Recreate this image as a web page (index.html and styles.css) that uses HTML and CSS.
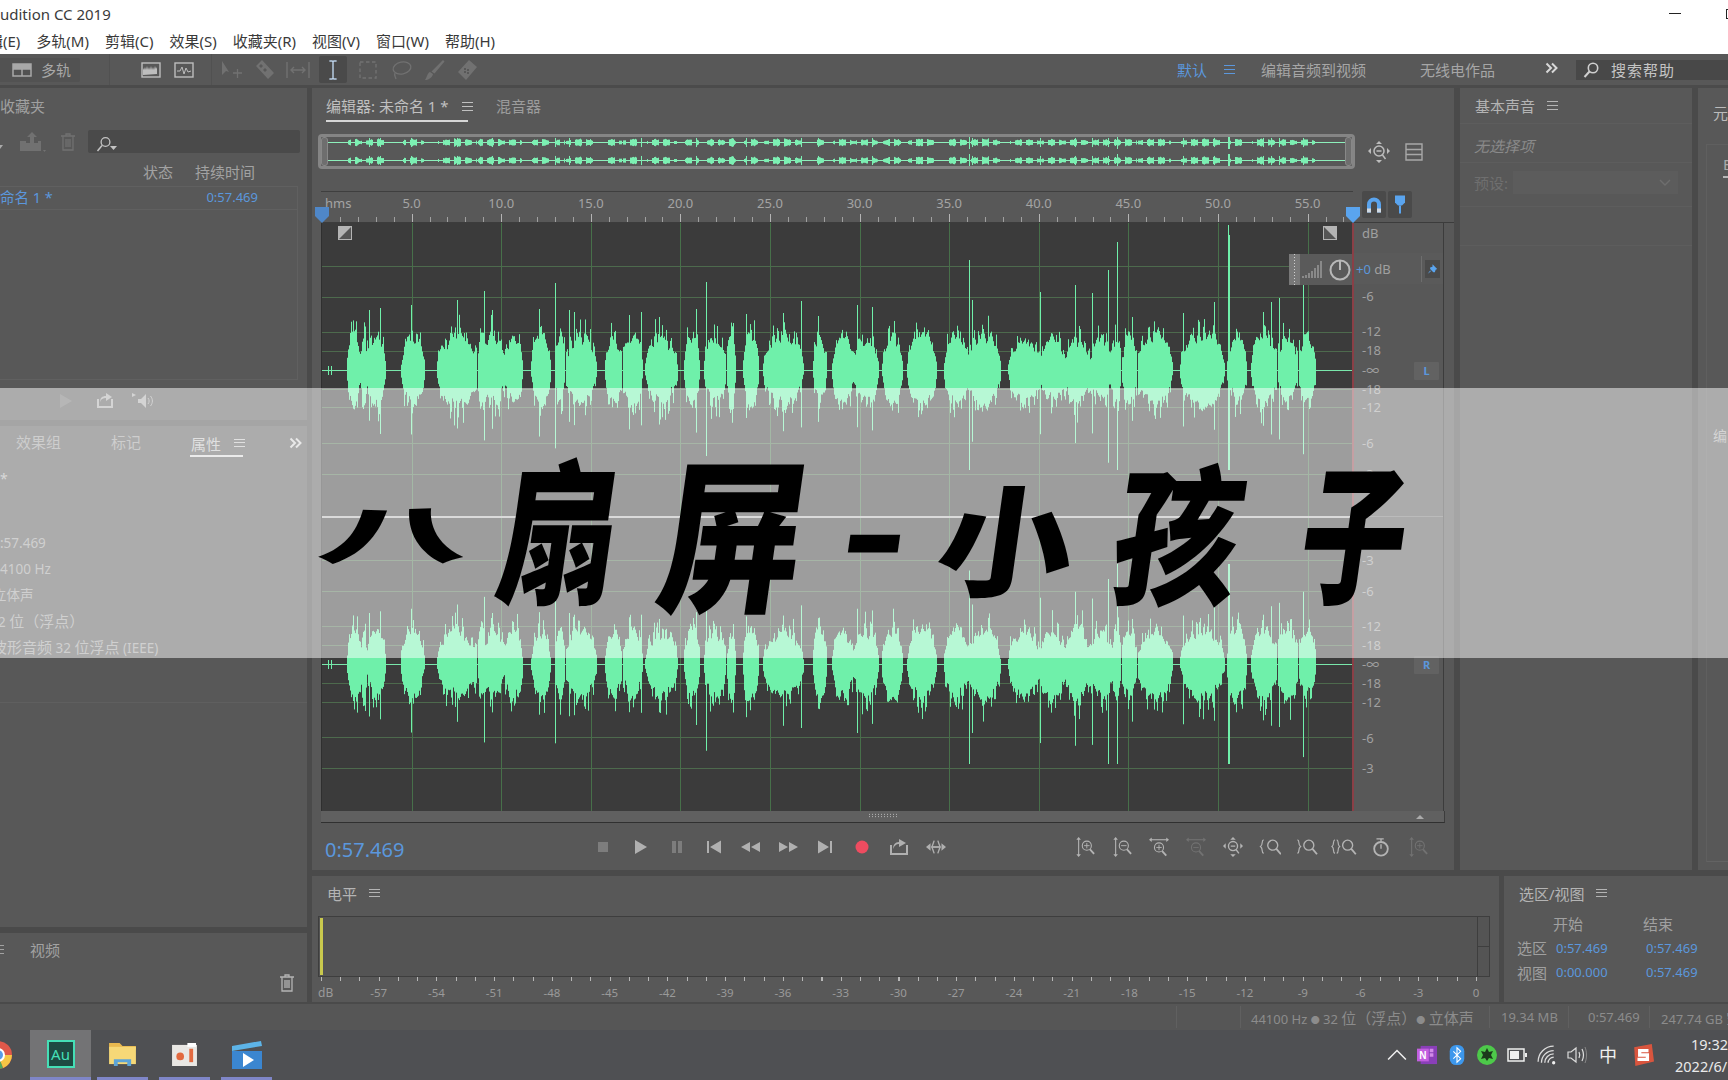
FILE: index.html
```html
<!DOCTYPE html>
<html lang="zh-CN">
<head>
<meta charset="utf-8">
<title>Adobe Audition CC 2019</title>
<link rel="stylesheet" href="styles.css">
</head>
<body>
<div class="app">
  <header class="titlebar">
    <div class="title-row"><span class="title">udition CC 2019</span><i class="win-min"></i><i class="win-max"></i></div>
    <nav class="menu"><span class="menu-first">辑(E)</span><span>多轨(M)</span><span>剪辑(C)</span><span>效果(S)</span><span>收藏夹(R)</span><span>视图(V)</span><span>窗口(W)</span><span>帮助(H)</span></nav>
  </header>

  <div class="toolbar">
    <div class="mode-btn">
      <svg class="ic20" viewBox="0 0 20 16"><path fill="none" stroke="currentColor" stroke-width="1.5" d="M1 2h18v12H1zM1 7h18M10 7v7"/><path fill="currentColor" d="M1 2h18v5H1z"/></svg>
      <span>多轨</span>
    </div>
    <i class="tb-sep sep-a"></i>
    <svg class="ic20 view-a" viewBox="0 0 20 16"><rect x="1" y="1" width="18" height="14" fill="none" stroke="currentColor" stroke-width="1.4"/><path fill="currentColor" d="M2 13V6l1 2 1-3 1 3 1-4 1 4 1-3 1 3 1-4 1 4 1-3 1 3 1-4 1 3 1-2v7z"/></svg>
    <svg class="ic20 view-b" viewBox="0 0 20 16"><rect x="1" y="1" width="18" height="14" fill="none" stroke="currentColor" stroke-width="1.4"/><path fill="none" stroke="currentColor" d="M3 9h3l2-4 2 7 2-6 2 4 3-1"/></svg>
    <i class="tb-sep sep-b"></i>
    <div class="tools">
      <svg class="ic24 dim" viewBox="0 0 24 20"><path fill="currentColor" d="M2 1v14l4-4 3 1z"/><path fill="none" stroke="currentColor" stroke-width="1.3" d="M13 13h9M17.500 9v9"/></svg>
      <svg class="ic24 dim" viewBox="0 0 24 20"><path fill="currentColor" fill-rule="evenodd" d="M3 6l6-6 12 13-6 6zM8 4L6 6l2 2 2-2zm4 4l-2 2 2 2 2-2z"/></svg>
      <svg class="ic24 dim" viewBox="0 0 24 20"><path fill="none" stroke="currentColor" stroke-width="1.4" d="M1 2v16M23 2v16M5 10h14M8 7l-3 3 3 3M16 7l3 3-3 3"/></svg>
      <div class="tool-on"><svg class="ic24" viewBox="0 0 24 22"><path fill="none" stroke="#b9cfe6" stroke-width="1.6" d="M8 1h3l1 1 1-1h3M12 2v18M8 21h3l1-1 1 1h3"/></svg></div>
      <svg class="ic24 dim" viewBox="0 0 24 20"><path fill="none" stroke="currentColor" stroke-width="1.4" stroke-dasharray="3.500 2.500" d="M4 2h16v16H4z"/></svg>
      <svg class="ic24 dim" viewBox="0 0 24 20"><ellipse cx="13" cy="8" rx="9" ry="6" fill="none" stroke="currentColor" stroke-width="1.3" transform="rotate(-12 13 8)"/><path fill="none" stroke="currentColor" stroke-width="1.300" d="M6 13c-1 2 0 3 1 6"/></svg>
      <svg class="ic24 dim" viewBox="0 0 24 20"><path fill="currentColor" d="M21 0l1.500 1.500-10 12-3-2zM8 12l3 2c-1 4-5 6-8 6 2-2 2-7 5-8z"/></svg>
      <svg class="ic24 dim" viewBox="0 0 24 20"><path fill="currentColor" d="M3 12L14 0l8 7-11 13z"/><path fill="#585858" d="M9 11h2v2H9zM12 9h2v2h-2zM12 12h2v2h-2zM9 8h2v2H9z"/></svg>
    </div>
    <div class="workspaces">
      <span class="ws-active">默认</span><i class="ham ham-blue"></i>
      <span class="ws ws-edit">编辑音频到视频</span>
      <span class="ws ws-radio">无线电作品</span>
      <svg class="chev chev-top" viewBox="0 0 13 12"><path fill="none" stroke="#d8d8d8" stroke-width="2" d="M1.500 1.500L6 6l-4.500 4.500M7 1.500L11.500 6 7 10.500"/></svg>
    </div>
    <div class="help">
      <svg class="ic16" viewBox="0 0 16 16"><circle cx="10" cy="6" r="4.700" fill="none" stroke="#cfcfcf" stroke-width="1.600"/><path stroke="#cfcfcf" stroke-width="2" d="M6.500 9.500L1.500 15"/></svg>
      <span>搜索帮助</span>
    </div>
  </div>

  <div class="workspace">
    <aside class="left-col">
      <section class="panel files">
        <div class="panel-head"><span class="files-title">收藏夹</span></div>
        <div class="file-tools">
          <i class="caret"></i>
          <svg class="ic26 dim" viewBox="0 0 26 22"><path fill="currentColor" d="M0 10h6v2h4V6H7l5-5 5 5h-3v6h4v-2h3v10H0z"/><path fill="currentColor" d="M23 19h3l-1.500 2z"/></svg>
          <svg class="ic16 dim" viewBox="0 0 16 18"><path fill="none" stroke="currentColor" stroke-width="1.300" d="M1 3h14M6 3V1h4v2M3 3v14h10V3M6 6v8M8 6v8M10 6v8"/></svg>
          <div class="file-search"><svg class="ic22" viewBox="0 0 22 16"><circle cx="9.500" cy="6" r="4.400" fill="none" stroke="#c4c4c4" stroke-width="1.300"/><path stroke="#c4c4c4" stroke-width="1.500" d="M6 9.500L1.500 15"/><path fill="#c4c4c4" d="M14 10h7l-3.500 4z"/></svg></div>
        </div>
        <div class="file-cols"><span class="col-state">状态</span><span class="col-dur">持续时间</span></div>
        <div class="file-list">
          <div class="file-row"><span class="blue file-name">命名 1 *</span><span class="blue file-dur">0:57.469</span></div>
        </div>
        <div class="file-play">
          <svg class="ic14 play-dim" viewBox="0 0 14 14"><path fill="currentColor" d="M1 0l12 7-12 7z"/></svg>
          <svg class="ic20 play-loop" viewBox="0 0 20 16"><path fill="none" stroke="currentColor" stroke-width="2" d="M3 6v8h14V6"/><path fill="currentColor" d="M5 9c0-4 2-6 6-6V0l6 4-6 4V5C8 5 6 6 5 9z"/></svg>
          <svg class="ic24 play-spk" viewBox="0 0 24 16"><path fill="currentColor" d="M0 0l4 2-4 2zM6 6h3l5-5v14l-5-5H6z"/><path fill="none" stroke="currentColor" d="M16 5c1.500 2 1.500 4 0 6M18.500 3c2.500 3 2.500 7 0 10"/></svg>
        </div>
      </section>

      <section class="panel props">
        <div class="tabs props-tabs">
          <span class="tab-fx">效果组</span><span class="tab-mark">标记</span>
          <span class="tab-on"><b>属性</b><i class="ham"></i></span>
          <svg class="chev chev-props" viewBox="0 0 13 12"><path fill="none" stroke="#d0d0d0" stroke-width="2" d="M1.500 1.500L6 6l-4.500 4.500M7 1.500L11.500 6 7 10.500"/></svg>
        </div>
        <div class="prop-star">*</div>
        <ul class="prop-list">
          <li>:57.469</li>
          <li>4100 Hz</li>
          <li class="prop-cut cjk">立体声</li>
          <li class="prop-two">2 <span class="cjk">位（浮点）</span></li>
          <li class="prop-cut2"><span class="cjk">波形音频</span> 32 <span class="cjk">位浮点</span> (IEEE)</li>
        </ul>
        <i class="prop-rule"></i>
      </section>

      <section class="panel video">
        <div class="video-tabs"><i class="ham ham-cut"></i><span>视频</span></div>
        <svg class="ic16 video-trash" viewBox="0 0 16 18"><path fill="none" stroke="currentColor" stroke-width="1.300" d="M1 3h14M6 3V1h4v2M3 3v14h10V3M6 6v8M8 6v8M10 6v8"/></svg>
      </section>
    </aside>

    <div class="right-area">
      <div class="top-row">
        <main class="panel editor">
          <div class="tabs editor-tabs">
            <span class="tab-on"><b>编辑器: 未命名 1 *</b><i class="ham"></i></span>
            <span class="tab-mix">混音器</span>
          </div>
          <div class="overview-row">
            <div class="overview">
              <i class="ov-handle"></i>
              <canvas id="ov" width="1017" height="29"></canvas>
              <i class="ov-handle"></i>
            </div>
            <svg class="ic22 ov-zoom" viewBox="0 0 22 22"><circle cx="11" cy="10" r="5" fill="none" stroke="currentColor" stroke-width="1.500"/><path stroke="currentColor" stroke-width="1.500" d="M8.500 10h5M14.500 14l3 4"/><path fill="currentColor" d="M11 0l3 3H8zM8 19h6l-3 3zM0 10l3-3v6zM22 10l-3-3v6z"/></svg>
            <svg class="ic18 ov-panels" viewBox="0 0 18 18"><path fill="none" stroke="currentColor" stroke-width="1.400" d="M1 1h16v16H1zM1 6.500h16M1 11.500h16"/></svg>
          </div>
          <div class="ruler-row">
            <div class="ruler">
              <span class="r-first">hms</span><span>5.0</span><span>10.0</span><span>15.0</span><span>20.0</span><span>25.0</span><span>30.0</span><span>35.0</span><span>40.0</span><span>45.0</span><span>50.0</span><span>55.0</span>
              <svg class="playhead ph-start" viewBox="0 0 14 16"><path fill="#4f87c8" d="M0 0h14v9l-7 7-7-7z"/></svg>
              <svg class="playhead ph-end" viewBox="0 0 14 16"><path fill="#5aa4ee" d="M0 0h14v9l-7 7-7-7z"/></svg>
            </div>
            <button class="sq-btn sq-first"><svg viewBox="0 0 16 18"><path fill="none" stroke="#5aa4ee" stroke-width="4" d="M3 17V9a5 5 0 0 1 10 0v8"/><path fill="#d0d8e0" d="M1 13h4v4H1zM11 13h4v4h-4z"/></svg></button>
            <button class="sq-btn"><svg viewBox="0 0 16 18"><path fill="#5aa4ee" d="M3 0h10v7l-3 3H6L3 7z"/><path fill="#5aa4ee" d="M7 10h2v8H7z"/></svg></button>
          </div>
          <div class="plot-row">
            <div class="plot">
              <canvas id="wave" width="1030" height="589"></canvas>
              <svg class="fade fade-l" viewBox="0 0 14 14"><path fill="#b4b4b4" d="M0 0h14v14H0z"/><path fill="#555" d="M1 13L13 1v12z"/></svg>
              <svg class="fade fade-r" viewBox="0 0 14 14"><path fill="#b4b4b4" d="M0 0h14v14H0z"/><path fill="#555" d="M1 1l12 12H1z"/></svg>
              <div class="hud">
                <i class="hud-grip"></i>
                <svg class="hud-bars" viewBox="0 0 20 18"><path stroke="#b8b8b8" stroke-width="1" d="M1 17v-2M4 17v-3M7 17v-5M10 17v-7M13 17V7M16 17V4M19 17V0"/></svg>
                <svg class="hud-knob" viewBox="0 0 22 22"><circle cx="11" cy="11" r="9.500" fill="none" stroke="#b8b8b8" stroke-width="2"/><path stroke="#b8b8b8" stroke-width="2" d="M11 2v9"/></svg>
              </div>
            </div>
            <div class="gutter">
              <span>dB</span>
              <div class="db-hud"><span><em>+0</em> dB</span><i></i><button class="pin"><svg viewBox="0 0 14 14"><path fill="#5aa4ee" d="M7 1l6 6-2 1-1 3-2 0-4-4 0-2 3-1zM4 9l1 1-4 3z"/></svg></button></div>
              <span>-6</span><span>-12</span><span>-18</span><span>-∞</span><span>-18</span><span>-12</span><span>-6</span><span>-3</span>
              <span>-3</span><span>-6</span><span>-12</span><span>-18</span><span>-∞</span><span>-18</span><span>-12</span><span>-6</span><span>-3</span>
              <b class="chan chan-l">L</b><b class="chan chan-r">R</b>
            </div>
          </div>
          <div class="scroll-row"><i class="scroll-grip"></i><i class="scroll-up"></i></div>
          <div class="transport">
            <span class="time">0:57.469</span>
            <div class="t-btns">
              <svg class="t dim2" viewBox="0 0 16 16"><path fill="currentColor" d="M3 3h10v10H3z"/></svg>
              <svg class="t" viewBox="0 0 16 16"><path fill="currentColor" d="M3 1l12 7-12 7z"/></svg>
              <svg class="t dim2" viewBox="0 0 16 16"><path fill="currentColor" d="M3 2h4v12H3zM9 2h4v12H9z"/></svg>
              <svg class="t" viewBox="0 0 16 16"><path fill="currentColor" d="M1 2h2v12H1zM15 1.500v13L4 8z"/></svg>
              <svg class="t t-w" viewBox="0 0 20 16"><path fill="currentColor" d="M0 8l9-5v10zM10 8l9-5v10z"/></svg>
              <svg class="t t-w" viewBox="0 0 20 16"><path fill="currentColor" d="M20 8l-9-5v10zM10 8L1 3v10z"/></svg>
              <svg class="t" viewBox="0 0 16 16"><path fill="currentColor" d="M15 2h-2v12h2zM1 1.500v13L12 8z"/></svg>
              <svg class="t" viewBox="0 0 16 16"><circle cx="8" cy="8" r="6.500" fill="#ee4c60"/></svg>
              <svg class="t t-w" viewBox="0 0 20 16"><path fill="none" stroke="currentColor" stroke-width="2" d="M2 6v9h16V6"/><path fill="currentColor" d="M4 10c0-4 2-7 6-7V0l7 4-7 4V5c-3 0-5 2-6 5z"/></svg>
              <svg class="t t-w" viewBox="0 0 22 16"><path fill="currentColor" d="M0 8l5-4v8zM22 8l-5-4v8z"/><path fill="none" stroke="currentColor" stroke-width="1.500" d="M9 1L6.500 8 9 15M13 1l2.500 7L13 15"/><path fill="currentColor" d="M6 7h10v2H6z"/></svg>
            </div>
            <div class="z-btns">
              <svg class="z" viewBox="0 0 22 22"><use href="#zv"/><path stroke="currentColor" d="M10 9.500h6M13 6.500v6"/></svg>
              <svg class="z" viewBox="0 0 22 22"><use href="#zv"/><path stroke="currentColor" d="M10 9.500h6"/></svg>
              <svg class="z" viewBox="0 0 22 22"><use href="#zh"/><path stroke="currentColor" d="M8 11.500h6M11 8.500v6"/></svg>
              <svg class="z dim" viewBox="0 0 22 22"><use href="#zh"/><path stroke="currentColor" d="M8 11.500h6"/></svg>
              <svg class="z" viewBox="0 0 22 22"><circle cx="11" cy="10" r="5" fill="none" stroke="currentColor" stroke-width="1.500"/><path stroke="currentColor" stroke-width="1.500" d="M8.500 10h5M14.500 14l3 4"/><path fill="currentColor" d="M11 0l3 3H8zM8 19h6l-3 3zM0 10l3-3v6zM22 10l-3-3v6z"/></svg>
              <svg class="z" viewBox="0 0 24 22"><path fill="none" stroke="currentColor" stroke-width="1.300" d="M5 3C2 4 5 8 1.500 10.500 5 13 2 17 5 18"/><use href="#zm" x="7"/></svg>
              <svg class="z" viewBox="0 0 24 22"><path fill="none" stroke="currentColor" stroke-width="1.300" d="M1.500 3C4.500 4 1.500 8 5 10.500 1.500 13 4.500 17 1.500 18"/><use href="#zm" x="6"/></svg>
              <svg class="z" viewBox="0 0 28 22"><path fill="none" stroke="currentColor" stroke-width="1.300" d="M4 3C1 4 4 8 .8 10.500 4 13 1 17 4 18M6 3c3 1 0 5 3.200 7.500C6 13 9 17 6 18"/><use href="#zm" x="10"/></svg>
              <svg class="z" viewBox="0 0 22 22"><circle cx="11" cy="13" r="7.500" fill="none" stroke="currentColor" stroke-width="2"/><path stroke="currentColor" stroke-width="1.500" d="M11 13V8M6 2h8M11 2v3"/></svg>
              <svg class="z dim" viewBox="0 0 22 22"><use href="#zv"/><path stroke="currentColor" d="M10 9.500h6M13 6.500v6"/></svg>
            </div>
          </div>
        </main>

        <section class="panel sound">
          <div class="sound-head"><span>基本声音</span><i class="ham"></i></div>
          <div class="sound-row sound-none">无选择项</div>
          <div class="sound-row sound-preset"><span>预设:</span><div class="preset-box"><svg viewBox="0 0 12 8"><path fill="none" stroke="#6e6e6e" stroke-width="1.400" d="M1 1l5 5 5-5"/></svg></div></div>
          <div class="sound-row sound-blank"></div>
        </section>

        <section class="panel meta">
          <div class="meta-title">元</div>
          <div class="meta-box"><span class="meta-tab">B</span><span class="meta-edit">编</span></div>
        </section>
      </div>

      <div class="bottom-row">
        <section class="panel level">
          <div class="level-head"><span>电平</span><i class="ham"></i></div>
          <div class="meter"><i class="meter-peak"></i><i class="meter-mid"></i><i class="meter-end"></i></div>
          <div class="meter-ticks"></div>
          <div class="meter-scale"><span class="m-first">dB</span><span>-57</span><span>-54</span><span>-51</span><span>-48</span><span>-45</span><span>-42</span><span>-39</span><span>-36</span><span>-33</span><span>-30</span><span>-27</span><span>-24</span><span>-21</span><span>-18</span><span>-15</span><span>-12</span><span>-9</span><span>-6</span><span>-3</span><span>0</span></div>
        </section>
        <section class="panel selection">
          <div class="level-head sel-head"><span>选区/视图</span><i class="ham"></i></div>
          <div class="sel-grid">
            <span></span><span class="sel-h">开始</span><span class="sel-h">结束</span>
            <span class="sel-l">选区</span><span class="blue">0:57.469</span><span class="blue">0:57.469</span>
            <span class="sel-l">视图</span><span class="blue">0:00.000</span><span class="blue">0:57.469</span>
          </div>
        </section>
      </div>
    </div>
  </div>

  <footer class="status">
    <i class="st-sep st-a"></i><i class="st-sep st-b"></i>
    <span class="st-format">44100 Hz <small>●</small> 32 <span class="cjk">位（浮点）</span><small>●</small> <span class="cjk">立体声</span></span><i class="st-sep"></i>
    <span class="st-size">19.34 MB</span><i class="st-sep"></i>
    <span class="st-dur">0:57.469</span><i class="st-sep"></i>
    <span class="st-free">247.74 GB <span class="cjk">空闲</span></span>
  </footer>

  <div class="taskbar">
    <svg class="task-chrome" viewBox="0 0 28 28"><circle cx="14" cy="14" r="14" fill="#e0584a"/><path fill="#f6c645" d="M14 14l14 0a14 14 0 0 1-9 13z"/><path fill="#52a95c" d="M14 14l5 13A14 14 0 0 1 1 9z"/><circle cx="14" cy="14" r="7" fill="#fff"/><circle cx="14" cy="14" r="5" fill="#5a9be8"/></svg>
    <div class="task-item task-on"><span class="au-logo">Au</span></div>
    <div class="task-item">
      <svg class="task-ic" viewBox="0 0 28 24"><path fill="#e9b950" d="M0 0h11l3 3h14v4H0z"/><path fill="#f6d877" d="M0 4h28v18H0z"/><path fill="#5da4d8" d="M5 24v-7h18v7h-4v-4H9v4z"/></svg>
    </div>
    <div class="task-item">
      <svg class="task-ic" viewBox="0 0 28 24"><path fill="#e9e7e4" d="M1 2h26v22H1z"/><path fill="#fff" d="M17 0h9v4h-9z"/><circle cx="9.500" cy="14" r="4" fill="#e2693f"/><path fill="#e2693f" d="M19 6h4v14h-4z"/></svg>
    </div>
    <div class="task-item">
      <svg class="task-ic task-ic-lg" viewBox="0 0 30 28"><path fill="#3b86d0" d="M0 10h30v18H0z"/><path fill="#5db4e8" d="M0 5L29 0l1 5L0 10z"/><path fill="#fff" d="M11 12l11 7-11 7z"/></svg>
    </div>
    <div class="tray">
      <svg class="tray-ic" viewBox="0 0 18 12"><path fill="none" stroke="#eee" stroke-width="1.400" d="M1 10l8-8 8 8"/></svg>
      <svg class="tray-ic" viewBox="0 0 22 20"><path fill="#8a3fb8" d="M4 0h18v20H4z"/><path fill="#c35fe0" d="M0 3h13v14H0z"/><path fill="#d28be8" d="M14 3h4v4h-4zM14 8h4v4h-4z"/><text x="6.500" y="14.500" font-size="11" font-weight="700" text-anchor="middle" fill="#fff" font-family="Liberation Sans">N</text></svg>
      <svg class="tray-ic" viewBox="0 0 16 22"><rect width="16" height="22" rx="7" fill="#3d97ec"/><path fill="none" stroke="#fff" stroke-width="1.200" d="M4 7l8 8-4 4V3l4 4-8 8"/></svg>
      <svg class="tray-ic" viewBox="0 0 20 20"><circle cx="10" cy="10" r="10" fill="#4dc94a"/><path fill="#1c3a1c" d="M10 3l2 4 4-1-2 4 2 4-4-1-2 3-2-3-4 1 2-4-2-4 4 1z"/></svg>
      <svg class="tray-ic" viewBox="0 0 20 14"><path fill="none" stroke="#eee" stroke-width="1.500" d="M1 1h16v12H1z"/><path fill="#eee" d="M3 3h9v8H3zM18 5h2v4h-2z"/></svg>
      <svg class="tray-ic" viewBox="0 0 18 18"><path fill="none" stroke="#ddd" stroke-width="1.200" d="M1 15a14 14 0 0 1 14-14M4 16a11 11 0 0 1 11-11M7 16a8 8 0 0 1 8-8M10 16a5 5 0 0 1 5-5"/><circle cx="15" cy="16" r="1.500" fill="#eee"/></svg>
      <svg class="tray-ic" viewBox="0 0 20 18"><path fill="none" stroke="#ddd" stroke-width="1.200" d="M1 6h3l5-4v14l-5-4H1zM12 6c1 2 1 4 0 6M15 3c2 4 2 8 0 12"/><path fill="none" stroke="#888" d="M18 1c2 5 2 11 0 16"/></svg>
      <span class="tray-zh">中</span>
      <svg class="tray-ic tray-sg" viewBox="0 0 20 20"><path fill="#d9553e" d="M2 3l16-3 2 16-17 4z"/><path fill="none" stroke="#fff" stroke-width="3" d="M15 6H7v4h7v4H5"/></svg>
      <div class="clock"><span class="clock-t">19:32</span><span>2022/6/12</span></div>
    </div>
  </div>

  <div class="banner" aria-label="八扇屏-小孩子">
    <span class="g g-ba">八</span><span class="g g-shan">扇</span><span class="g g-ping">屏</span><span class="g g-dash">-</span><span class="g g-xiao">小</span><span class="g g-hai">孩</span><span class="g g-zi">子</span>
  </div>
</div>

<svg class="defs" width="0" height="0">
  <defs>
    <g id="zm"><circle cx="8" cy="9" r="5.500" fill="none" stroke="currentColor" stroke-width="1.500"/><path stroke="currentColor" stroke-width="2" d="M12 13l5 6"/></g>
    <g id="zv"><path fill="none" stroke="currentColor" stroke-width="1.200" d="M4 2v18"/><path fill="currentColor" d="M4 0l2.500 3h-5zM4 22l2.500-3h-5z"/><circle cx="13" cy="9.500" r="5" fill="none" stroke="currentColor" stroke-width="1.200"/><path stroke="currentColor" stroke-width="2" d="M16.500 13.500l4.500 5"/></g>
    <g id="zh"><path fill="none" stroke="currentColor" stroke-width="1.200" d="M2 3h18"/><path fill="currentColor" d="M0 3l3-2.500v5zM22 3l-3-2.500v5z"/><circle cx="11" cy="11.500" r="5" fill="none" stroke="currentColor" stroke-width="1.200"/><path stroke="currentColor" stroke-width="2" d="M14.500 15.500l4.500 5"/></g>
  </defs>
</svg>
<script src="wave.js"></script>
</body>
</html>
```

FILE: styles.css
```css
* { box-sizing: border-box; }
html, body { margin: 0; padding: 0; }
body {
  width: 1728px; height: 1080px; overflow: hidden;
  font-family: "Noto Sans", "Noto Sans CJK SC", sans-serif;
  font-size: 15px; color: #a2a2a2; background: #4a4a4a;
}
i { display: block; font-style: normal; }
svg { display: block; flex: none; }
.defs { position: absolute; }
.app { position: relative; display: flex; flex-direction: column; width: 1728px; height: 1080px; overflow: hidden; }
.blue { color: #5b97dc; }
.dim { color: #717171; }
.cjk { font-size: 15px; }
.ic14 { width: 14px; height: 14px; }
.ic16 { width: 16px; height: 18px; }
.ic18 { width: 18px; height: 18px; }
.ic20 { width: 20px; height: 16px; }
.ic22 { width: 22px; height: 22px; }
.ic24 { width: 24px; height: 20px; }
.ic26 { width: 26px; height: 22px; }
.ham {
  width: 11px; height: 9px; flex: none;
  background: linear-gradient(currentColor, currentColor) 0 0/100% 1.400px no-repeat,
              linear-gradient(currentColor, currentColor) 0 50%/100% 1.400px no-repeat,
              linear-gradient(currentColor, currentColor) 0 100%/100% 1.400px no-repeat;
}

/* title bar */
.titlebar { height: 54px; background: #fff; color: #333; flex: none; }
.title-row { height: 27px; display: flex; align-items: center; }
.title { width: 1669px; flex: none; font-size: 15px; color: #3b3b3b; white-space: nowrap; }
.win-min { width: 12px; height: 1px; background: #222; flex: none; }
.win-max { width: 12px; height: 10px; border: 1px solid #222; margin-left: 45px; flex: none; }
.menu { height: 27px; display: flex; align-items: center; gap: 16px; color: #3a3a3a; white-space: nowrap; }
.menu-first { margin-left: -12px; }

/* toolbar */
.toolbar { height: 34px; flex: none; display: flex; align-items: center; background: #585858; border-bottom: 3px solid #4b4b4b; color: #a2a2a2; white-space: nowrap; }
.mode-btn { width: 80px; height: 24px; flex: none; display: flex; align-items: center; gap: 9px; padding-left: 12px; background: #525252; color: #a8a8a8; border-radius: 0 2px 2px 0; }
.tb-sep { width: 1px; height: 31px; background: #515151; flex: none; }
.sep-a { margin-left: 29px; }
.view-a { margin-left: 31px; color: #bdbdbd; }
.view-b { margin-left: 13px; color: #bdbdbd; }
.sep-b { margin-left: 17px; }
.tools { display: flex; align-items: center; gap: 9px; margin-left: 8px; flex: none; }
.tool-on { width: 28px; height: 27px; background: #4a4a4a; display: flex; align-items: center; justify-content: center; border-radius: 2px; }
.workspaces { display: flex; align-items: center; margin-left: 698px; flex: none; }
.ws-active { color: #5b97dc; }
.ham-blue { color: #5b97dc; margin-left: 17px; }
.ws { color: #a6a6a6; }
.ws-edit { margin-left: 26px; }
.ws-radio { margin-left: 54px; }
.chev { width: 13px; height: 12px; }
.chev-top { margin-left: 50px; margin-top: -4px; }
.help { flex: 1; height: 20px; margin-left: 18px; background: #484848; display: flex; align-items: center; padding-left: 7px; gap: 12px; color: #c4c4c4; letter-spacing: 1px; }

/* workspace */
.workspace { flex: none; height: 914px; margin-bottom: 2px; display: flex; gap: 5px; }
.panel { background: #585858; position: relative; }
.left-col { width: 307px; flex: none; display: flex; flex-direction: column; gap: 6px; }
.right-area { flex: 1; min-width: 0; display: flex; flex-direction: column; gap: 6px; }
.top-row { height: 782px; display: flex; gap: 6px; }
.bottom-row { height: 126px; display: flex; gap: 5px; }

/* files */
.files { height: 332px; flex: none; }
.panel-head { height: 35px; display: flex; align-items: center; }
.files-title { color: #a0a0a0; }
.file-tools { height: 23px; margin-top: 7px; display: flex; align-items: center; }
.caret { width: 0; height: 0; flex: none; border: 3px solid transparent; border-top: 4px solid #aaa; border-bottom: 0; margin-left: -3px; margin-top: 10px; }
.file-tools .ic26 { margin-left: 17px; }
.file-tools .ic16 { margin-left: 14px; }
.file-search { width: 212px; height: 23px; flex: none; margin-left: 12px; background: #4a4a4a; padding: 3px 0 0 8px; border-radius: 2px; }
.file-cols { height: 26px; margin-top: 7px; padding-bottom: 4px; display: flex; align-items: center; }
.col-state { margin-left: 143px; }
.col-dur { margin-left: 22px; }
.file-list { width: 298px; height: 194px; border: 1px solid #606060; border-left: 0; }
.file-row { height: 23px; display: flex; align-items: center; justify-content: space-between; padding: 0 39px 3px 0; border-bottom: 1px solid #606060; font-size: 13px; }
.file-name { font-size: 14.500px; }
.file-play { display: flex; align-items: center; height: 41px; }
.play-dim { margin-left: 59px; color: #6d6d6d; }
.play-loop { margin-left: 22px; color: #a8a8a8; }
.play-spk { margin-left: 17px; color: #a8a8a8; }

/* properties */
.props { flex: 1; min-height: 0; }
.tabs { display: flex; align-items: flex-start; color: #9c9c9c; white-space: nowrap; }
.tab-on { display: flex; align-items: center; color: #c0c0c0; border-bottom: 2px solid #d6d6d6; flex: none; }
.tab-on b { font-weight: 400; }
.props-tabs { height: 34px; padding-top: 5px; }
.tab-fx { margin-left: 16px; }
.tab-mark { margin-left: 50px; }
.props-tabs .tab-on { margin-left: 49px; width: 53px; height: 26px; padding-left: 1px; }
.props-tabs .ham { margin-left: 13px; }
.chev-props { margin-left: 46px; margin-top: 6px; }
.prop-star { height: 26px; line-height: 32px; margin-top: 3px; color: #b0b0b0; font-size: 14px; }
.prop-list { list-style: none; margin: 41px 0 0; padding: 0; }
.prop-list li { height: 26px; line-height: 26px; font-size: 13.500px; color: #a0a0a0; white-space: nowrap; }
.prop-cut { margin-left: -7px; }
.prop-two { margin-left: -2px; }
.prop-cut2 { margin-left: -8px; }
.prop-rule { height: 1px; background: #5f5f5f; margin-top: 42px; }

/* video */
.video { height: 69px; flex: none; }
.video-tabs { height: 33px; display: flex; align-items: center; gap: 26px; }
.ham-cut { margin-left: -7px; }
.video-trash { margin-left: 279px; margin-top: 8px; color: #b4b4b4; }

/* editor */
.editor { width: 1142px; flex: none; }
.editor-tabs { height: 34px; padding: 7px 0 0 14px; }
.editor-tabs .tab-on { height: 27px; width: 142px; gap: 13px; align-items: flex-start; }
.tab-mix { margin-left: 28px; }
.editor-tabs .ham { margin-top: 7px; }
.overview-row { height: 35px; margin: 12px 0 22px 6px; display: flex; align-items: center; }
.overview { width: 1037px; height: 35px; flex: none; display: flex; align-items: center; border: 3px solid #858585; border-radius: 4px; }
.ov-handle { width: 7px; height: 100%; background: #6e6e6e; border: 1px solid #888; border-radius: 3px; flex: none; }
#ov { display: block; width: 1017px; height: 29px; flex: none; }
.ov-zoom { margin-left: 13px; color: #bdbdbd; }
.ov-panels { margin-left: 15px; color: #a8a8a8; }
.ruler-row { margin-left: 9px; height: 31px; display: flex; align-items: flex-start; }
.ruler {
  position: relative; width: 1032px; height: 31px; flex: none; display: flex; align-items: flex-start; padding-top: 1px;
  border-top: 1px solid #3f3f3f; font-size: 13px; color: #a4a4a4; line-height: 20px;
  background:
    repeating-linear-gradient(90deg, #b4b4b4 0 1px, transparent 1px 89.600px) 1px 100%/100% 8px no-repeat,
    repeating-linear-gradient(90deg, #a0a0a0 0 1px, transparent 1px 17.920px) 1px 100%/100% 5px no-repeat;
}
.ruler span { width: 89.600px; flex: none; text-align: center; }
.ruler .r-first { width: 45.800px; text-align: left; padding-left: 4px; }
.playhead { position: absolute; width: 14px; height: 16px; bottom: -1px; }
.ph-start { left: -6px; }
.ph-end { right: -7px; }
.sq-btn { width: 24px; height: 27px; margin: 0 0 0 2px; padding: 4px; background: #4a4a4a; border: 0; border-radius: 2px; flex: none; }
.sq-first { margin-left: 9px; }
.sq-btn svg { width: 100%; height: 100%; }
.plot-row { display: flex; margin-left: 9px; height: 589px; border-top: 1px solid #3c3c3c; }
.plot { position: relative; width: 1031px; flex: none; background: #3b3b3b; border-left: 1px solid #2f2f2f; }
#wave { display: block; width: 1030px; height: 589px; }
.fade { position: absolute; width: 14px; height: 14px; top: 3px; }
.fade-l { left: 16px; }
.fade-r { right: 15px; }
.hud { position: absolute; right: 0; top: 31px; width: 63px; height: 31px; display: flex; align-items: center; background: #5a5a5a; }
.hud-grip { width: 11px; height: 31px; flex: none; background: #787878 radial-gradient(#d0d0d0 30%, transparent 35%) center/3px 3px repeat-y; }
.hud-bars { width: 20px; height: 18px; margin-left: 2px; }
.hud-knob { width: 22px; height: 22px; margin-left: 7px; }
.gutter {
  position: relative; width: 92px; flex: none; display: grid; justify-items: start; align-items: start;
  grid-template-rows: 27px 36px 35px 19px 20px 19px 18px 36px 31px 86px 31px 35px 19px 19px 19px 19px 36px 30px 1fr;
  border-left: 2px solid #8a3f46; border-right: 1px solid #3c3c3c; padding: 3px 0 0 8px; font-size: 13px; line-height: 14px; color: #a0a0a0; white-space: nowrap;
  background: linear-gradient(#767676, #767676) 0 293px/100% 1px no-repeat;
}
.db-hud { height: 31px; width: 89px; margin-left: -8px; padding-left: 2px; display: flex; align-items: center; background: #5a5a5a; }
.db-hud span { flex: none; }
.db-hud em { color: #5b97dc; font-style: normal; }
.db-hud i { width: 1px; height: 26px; background: #6e6e6e; margin-left: 30px; flex: none; }
.pin { width: 15px; height: 18px; margin-left: 3px; padding: 2px; background: #4a4a4a; border: 0; flex: none; }
.pin svg { width: 100%; height: 100%; }
.chan { position: absolute; right: 4px; width: 25px; height: 18px; background: #626262; color: #5b97dc; font-size: 11px; line-height: 18px; text-align: center; border-radius: 1px; font-weight: 700; }
.chan-l { top: 139px; }
.chan-r { top: 433px; }
.scroll-row { position: relative; margin-left: 9px; width: 1124px; height: 12px; background: #606060; border-bottom: 1px solid #303030; border-right: 1px solid #3c3c3c; display: flex; align-items: center; justify-content: center; }
.scroll-grip { width: 30px; height: 5px; background: radial-gradient(#c8c8c8 35%, transparent 40%) 0 0/3px 2.500px; margin-top: -2px; }
.scroll-up { position: absolute; right: 20px; top: 4px; border: 4px solid transparent; border-bottom: 4px solid #aaa; border-top: 0; }
.transport { height: 47px; display: flex; align-items: center; }
.time { margin-left: 13px; font-size: 20px; color: #5b97dc; width: 259.500px; flex: none; position: relative; top: 3px; }
.t-btns { display: grid; grid-template-columns: repeat(10, 37px); justify-items: center; align-items: center; color: #b0b0b0; flex: none; }
.t { width: 16px; height: 16px; }
.t-w { width: 20px; }
.dim2 { color: #7d7d7d; }
.z-btns { display: grid; grid-template-columns: repeat(10, 37px); justify-items: center; align-items: center; margin-left: 112px; color: #b4b4b4; flex: none; }
.z { width: 20px; height: 20px; }
.z[viewBox="0 0 24 22"] { width: 22px; }
.z[viewBox="0 0 28 22"] { width: 26px; }
.z.dim { color: #727272; }

/* sound */
.sound { width: 232px; flex: none; }
.sound-head { height: 36px; display: flex; align-items: center; padding-left: 15px; gap: 12px; color: #b4b4b4; border-bottom: 1px solid #5d5d5d; }
.sound-row { height: 39px; border-bottom: 1px solid #5d5d5d; padding-left: 14px; display: flex; align-items: center; }
.sound-none { font-style: italic; color: #8a8a8a; padding-top: 4px; }
.sound-preset { height: 44px; color: #6f6f6f; gap: 5px; padding-bottom: 4px; }
.preset-box { width: 165px; height: 23px; flex: none; background: #5c5c5c; display: flex; align-items: center; justify-content: flex-end; padding-right: 7px; }
.preset-box svg { width: 12px; height: 8px; }

/* meta */
.meta { flex: 1; min-width: 0; overflow: hidden; }
.meta-title { height: 56px; padding: 14px 0 0 15px; color: #bbb; font-size: 15px; }
.meta-box { position: relative; height: 718px; margin-left: 8px; border: 1px solid #5f5f5f; border-right: 0; border-bottom: 1px solid #636363; padding: 9px 0 0 16px; color: #aaa; }
.meta-tab { display: block; width: 20px; border-bottom: 2px solid #b8b8b8; height: 24px; }
.meta-edit { position: absolute; left: 6px; top: 280px; font-size: 14px; }

/* level */
.level { width: 1187px; flex: none; }
.level-head { height: 34px; display: flex; align-items: center; padding-left: 15px; gap: 12px; color: #b4b4b4; }
.meter { position: relative; margin: 6px 0 0 6px; width: 1172px; height: 61px; border: 1px solid #3e3e3e; background: #545454; }
.meter-peak { position: absolute; left: 1px; top: 1px; bottom: 1px; width: 3px; background: linear-gradient(#c9c94d, #c9c94d) 0 0/100% 28px no-repeat, linear-gradient(#c9c94d, #c9c94d) 0 100%/100% 29px no-repeat; }
.meter-end { position: absolute; right: 11px; top: 0; bottom: 0; width: 1px; background: #3e3e3e; }
.meter-mid { position: absolute; right: 0; top: 29px; height: 1px; width: 11px; background: #3e3e3e; }
.meter-ticks {
  margin-left: 9px; width: 1160px; height: 5px;
  background: repeating-linear-gradient(90deg, #b8b8b8 0 1px, transparent 1px 19.250px) 0 0/100% 4px no-repeat;
}
.meter-scale { display: flex; height: 20px; align-items: center; font-size: 11.500px; color: #9a9a9a; white-space: nowrap; }
.meter-scale span { width: 57.750px; flex: none; text-align: center; }
.meter-scale .m-first { width: 37.900px; text-align: left; padding-left: 6px; font-size: 12px; }

/* selection */
.selection { flex: 1; min-width: 0; }
.sel-head { gap: 11px; }
.sel-grid { display: grid; grid-template-columns: 39px 90px 70px; grid-auto-rows: 24.500px; margin-top: 1px; padding-left: 13px; align-items: center; font-size: 13px; color: #a0a0a0; }
.sel-h { font-size: 15px; margin-left: -3px; }
.sel-l { font-size: 15px; }

/* status */
.status { height: 26px; flex: none; background: #565656; display: flex; align-items: center; font-size: 13px; color: #8c8c8c; white-space: nowrap; }
.status > span { flex: none; }
.status small { font-size: 9px; vertical-align: 1px; }
.st-sep { width: 1px; height: 22px; background: #606060; flex: none; }
.st-a { margin-left: 1176px; }
.st-b { margin-left: 63px; }
.st-format { margin-left: 10px; width: 238px; }
.st-size { margin-left: 11px; width: 67px; }
.st-dur { margin-left: 19px; width: 61px; }
.st-free { margin-left: 11px; }

/* taskbar */
.taskbar { height: 50px; flex: none; display: flex; align-items: center; background: #4f5053; }
.task-chrome { width: 28px; height: 28px; margin-left: -16px; margin-right: 18px; }
.task-item { position: relative; width: 51px; height: 50px; flex: none; margin-right: 11px; display: flex; align-items: center; justify-content: center; border-bottom: 3px solid #7f86c8; }
.task-on { width: 61px; background: #737375; margin-right: 6px; }
.au-logo { width: 28px; height: 28px; background: #1e4a42; border: 2px solid #45dfb6; color: #45dfb6; font-size: 15px; line-height: 24px; text-align: center; }
.task-ic { width: 27px; height: 23px; margin-top: 2px; }
.task-ic-lg { width: 30px; height: 28px; }
.tray { display: flex; align-items: center; margin-left: 1104px; height: 50px; flex: none; }
.tray-ic { width: 20px; height: 20px; margin: 0 5px; }
.tray > .tray-ic:nth-child(1) { margin-left: 0; }
.tray-zh { width: 20px; margin: 0 5px 0 6px; color: #f0f0f0; font-size: 18px; text-align: center; line-height: 20px; flex: none; }
.tray-sg { width: 22px; height: 22px; margin-left: 9px; }
.clock { display: flex; flex-direction: column; width: 60px; flex: none; margin-left: 16px; line-height: 22px; color: #eaeaea; font-size: 14.500px; white-space: nowrap; }
.clock-t { margin-left: 16px; }

/* caption band */
.banner {
  position: absolute; left: 0; right: 0; top: 388px; height: 270px; display: flex; align-items: center; padding-left: 320px;
  background: rgba(255, 255, 255, .5); color: #000; font-family: "Noto Sans CJK SC", sans-serif; font-weight: 900; font-size: 150px; line-height: 1;
}
.g { display: block; flex: none; width: 150px; text-align: center; }
.g-ba { transform: translateY(8px) skewX(-10deg) scaleY(.42); }
.g-shan { margin-left: 17px; transform: translateY(1px) skewX(-8deg) scale(.8, 1.04); }
.g-ping { margin-left: 22px; transform: translateY(4px) skewX(-8deg) scale(.95, 1.1); }
.g-dash { width: 50px; margin-left: 43px; transform: translateY(0) skewX(-8deg) scale(1.6, 1.3); font-size: 110px; }
.g-xiao { margin-left: 30px; transform: translateY(12px) skewX(-8deg) scale(.9, .8); }
.g-hai { margin-left: 23px; transform: translateY(5px) skewX(-8deg) scale(.85, 1); }
.g-zi { margin-left: 26px; transform: translateY(4px) skewX(-8deg) scale(.7, 1); }
```

FILE: wave.js
```js
(function () {
  var seed = 20190;
  function rnd() {
    seed |= 0; seed = seed + 0x6D2B79F5 | 0;
    var t = Math.imul(seed ^ seed >>> 15, 1 | seed);
    t = t + Math.imul(t ^ t >>> 7, 61 | t) ^ t;
    return ((t ^ t >>> 14) >>> 0) / 4294967296;
  }
  var X0 = 322, W = 1030;
  var bursts = [
    [347,361],[361,367],[367,386],[401,425],[437,477],[478,486],[482,505],[505,523],[531,551],[555,565],[566,597],
    [605,622],[623,643],[645,678],[684,700],[704,726],[727,736],[743,759],[763,804],[813,827],[832,853],[853,879],
    [882,903],[907,937],[944,968],[968,1001],[1008,1040],[1040,1065],[1065,1090],[1090,1112],[1112,1121],[1122,1137],
    [1138,1173],[1180,1225],[1227,1247],[1251,1277],[1278,1298],[1299,1316]
  ];
  var spikes = [
    [369,60],[380,62],[411,65],[457,70],[484,79],[492,60],[539,61],[555,87],[569,60],[574,58],[629,55],[641,58],[659,53],
    [696,61],[706,88],[733,47],[746,56],[783,57],[801,69],[818,54],[857,65],[872,63],[969,110],[972,70],[1040,78],[1075,85],
    [1092,77],[1108,100],[1117,128],[1132,53],[1183,57],[1214,68],[1228,145],[1229,135],[1263,58],[1271,68],[1279,72],[1303,85]
  ];
  function peaks(b, step, hi, wd) {
    var list = [];
    for (var p = b[0] + rnd() * step; p < b[1]; p += step * (.6 + rnd() * .9)) {
      list.push([p, hi * (.35 + rnd() * .65), wd * (.7 + rnd() * .6)]);
    }
    return list;
  }
  function peakAt(list, x) {
    var m = 0;
    list.forEach(function (k) {
      var v = k[1] * (1 - Math.abs(x - k[0]) / k[2]);
      if (v > m) m = v;
    });
    return m;
  }
  function channel(scaleT) {
    var T = new Float32Array(W), B = new Float32Array(W), body = new Float32Array(W);
    bursts.forEach(function (b, n) {
      var len = b[1] - b[0];
      var full = 19 + rnd() * 6;
      var midT = peaks(b, 7, 20, 6), midB = peaks(b, 7, 20, 6);
      var spT = peaks(b, 4, 36, 1.8), spB = peaks(b, 4, 36, 1.8);
      var next = bursts[n + 1], prev = bursts[n - 1];
      var joinR = next && next[0] - b[1] <= 1, joinL = prev && b[0] - prev[1] <= 1;
      for (var x = b[0]; x < b[1]; x++) {
        var t = (x - b[0] + .5) / len;
        var env = Math.pow(Math.sin(Math.PI * t), .5);
        if ((t > .5 && joinR) || (t < .5 && joinL)) env = Math.max(env, .55);
        var base = env * full;
        var i = x - X0;
        var e2 = Math.pow(env, .9);
        T[i] = Math.max(T[i], base + Math.max(peakAt(midT, x), peakAt(spT, x)) * e2);
        B[i] = Math.max(B[i], base + Math.max(peakAt(midB, x), peakAt(spB, x)) * e2);
        body[i] = Math.max(body[i], base);
      }
    });
    spikes.forEach(function (s) {
      var i = s[0] - X0;
      T[i] = Math.min(s[1] * scaleT, scaleT < 1 ? 100 : 999);
      B[i] = Math.min(s[1] * (.8 + rnd() * .3), 100);
    });
    return { T: T, B: B, body: body };
  }
  var ch1 = channel(1), ch2 = channel(.85);

  var cv = document.getElementById("wave");
  var c = cv.getContext("2d");
  var Y0 = 223;
  var hLines = [266, 297, 332, 351, 389, 407, 443, 474, 560, 591, 626, 645, 683, 702, 737, 768];
  c.fillStyle = "#3b3b3b"; c.fillRect(0, 0, cv.width, cv.height);
  c.fillStyle = "#4d6a4d";
  hLines.forEach(function (y) { c.fillRect(0, y - Y0, cv.width, 1); });
  c.fillStyle = "#47704a";
  for (var k = 1; k <= 11; k++) c.fillRect(Math.round(89.6 * k), 0, 1, cv.height);
  c.fillStyle = "#b4b4b4"; c.fillRect(0, 516 - Y0, cv.width, 2);
  function drawChannel(cy, ch) {
    c.fillStyle = "#79e7ab";
    c.fillRect(0, cy - Y0, cv.width, 1);
    c.fillStyle = "#6ff0aa";
    for (var i = 0; i < W; i++) {
      if (ch.T[i] > 0) c.fillRect(i, cy - Y0 - ch.T[i], 1, ch.T[i] + ch.B[i]);
    }
    c.fillRect(6, cy - Y0 - 4, 1, 9); c.fillRect(9, cy - Y0 - 4, 1, 9);
  }
  drawChannel(370, ch1);
  drawChannel(664, ch2);

  var ov = document.getElementById("ov");
  var o = ov.getContext("2d");
  [5, 23].forEach(function (cy) {
    o.fillStyle = "#8df0bb";
    o.fillRect(0, cy, ov.width, 1);
    o.fillStyle = "#7cf0b3";
    for (var i = 0; i < W; i++) {
      var x = i - 6;
      var v = (ch1.T[i] + ch1.B[i]) / 2;
      var h = Math.min(v, 50) / 11;
      if (h > 1.2 && (i % 11) < 7) o.fillRect(x, cy - h + .5, 1, h * 2);
      if (ch1.T[i] > 100) o.fillRect(x, cy - 6, 1, 13);
    }
  });
})();
```
